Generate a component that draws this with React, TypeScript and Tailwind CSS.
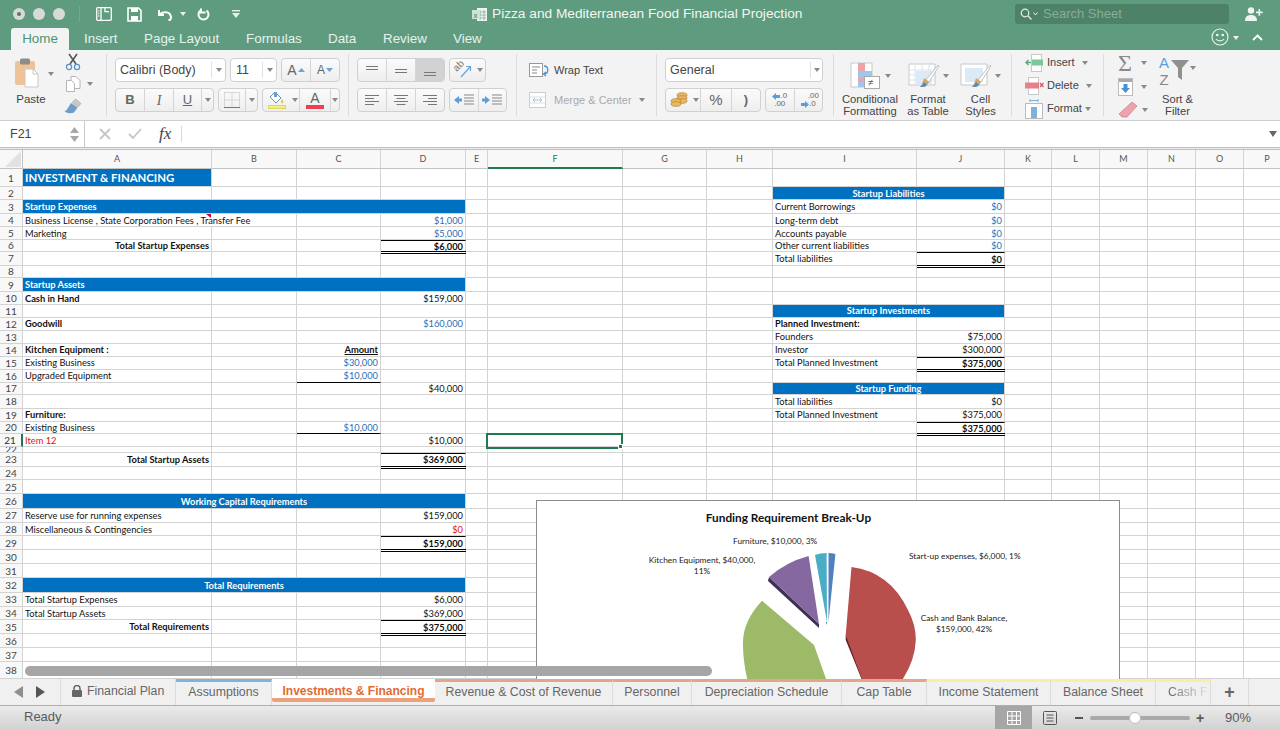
import React from "react";

const COLS = ["A","B","C","D","E","F","G","H","I","J","K","L","M","N","O","P"];
const ROW_H = [18,13,14,13,12.5,12.5,13.5,12.5,14,12.5,13,13,13,13,13,13,12.5,13.5,13,12.5,13,5.5,14,13.5,14,15,13.5,13.5,14,14,14,15,13.5,13.5,14,14,14,17];

const UI = "font-['Liberation_Sans',Arial,sans-serif]";
const BLUE = "bg-[#0070c0] border-[#0070c0] text-white font-bold";
const B = "font-bold";
const LINK = "text-[#2e6db4]";
const R = "justify-end";
const TOP = "border-t border-t-black";
const DBL = "after:absolute after:left-0 after:-right-px after:-bottom-[3px] after:z-10 after:h-[3px] after:border-y after:border-black";
const UL = "border-b border-b-black";

type Cell = { c: number; span?: number; t?: string; k?: string; tri?: boolean };
const DATA: Record<number, Cell[]> = {
  1: [{ c: 0, t: "INVESTMENT & FINANCING", k: BLUE + " text-[11.4px]" }],
  2: [{ c: 8, span: 2, t: "Startup Liabilities", k: BLUE + " justify-center" }],
  3: [{ c: 0, span: 4, t: "Startup Expenses", k: BLUE }, { c: 8, t: "Current Borrowings" }, { c: 9, t: "$0", k: R + " " + LINK }],
  4: [{ c: 0, span: 2, t: "Business License , State Corporation Fees , Transfer Fee", tri: true }, { c: 3, t: "$1,000", k: R + " " + LINK }, { c: 8, t: "Long-term debt" }, { c: 9, t: "$0", k: R + " " + LINK }],
  5: [{ c: 0, t: "Marketing" }, { c: 3, t: "$5,000", k: R + " " + LINK }, { c: 8, t: "Accounts payable" }, { c: 9, t: "$0", k: R + " " + LINK }],
  6: [{ c: 0, t: "Total Startup Expenses", k: R + " " + B }, { c: 3, t: "$6,000", k: [R, B, TOP, DBL].join(" ") }, { c: 8, t: "Other current liabilities" }, { c: 9, t: "$0", k: R + " " + LINK }],
  7: [{ c: 8, t: "Total liabilities" }, { c: 9, t: "$0", k: [R, B, TOP, DBL].join(" ") }],
  9: [{ c: 0, span: 4, t: "Startup Assets", k: BLUE }],
  10: [{ c: 0, t: "Cash in Hand", k: B }, { c: 3, t: "$159,000", k: R }],
  11: [{ c: 8, span: 2, t: "Startup Investments", k: BLUE + " justify-center" }],
  12: [{ c: 0, t: "Goodwill", k: B }, { c: 3, t: "$160,000", k: R + " " + LINK }, { c: 8, t: "Planned Investment:", k: B }],
  13: [{ c: 8, t: "Founders" }, { c: 9, t: "$75,000", k: R }],
  14: [{ c: 0, t: "Kitchen Equipment :", k: B }, { c: 2, t: "Amount", k: R + " " + B + " underline" }, { c: 8, t: "Investor" }, { c: 9, t: "$300,000", k: R }],
  15: [{ c: 0, t: "Existing Business" }, { c: 2, t: "$30,000", k: R + " " + LINK }, { c: 8, t: "Total Planned Investment" }, { c: 9, t: "$375,000", k: [R, B, TOP, DBL].join(" ") }],
  16: [{ c: 0, t: "Upgraded Equipment" }, { c: 2, t: "$10,000", k: [R, LINK, UL].join(" ") }],
  17: [{ c: 3, t: "$40,000", k: R }, { c: 8, span: 2, t: "Startup Funding", k: BLUE + " justify-center" }],
  18: [{ c: 8, t: "Total liabilities" }, { c: 9, t: "$0", k: R }],
  19: [{ c: 0, t: "Furniture:", k: B }, { c: 8, t: "Total Planned Investment" }, { c: 9, t: "$375,000", k: R }],
  20: [{ c: 0, t: "Existing Business" }, { c: 2, t: "$10,000", k: [R, LINK, UL].join(" ") }, { c: 9, t: "$375,000", k: [R, B, TOP, DBL].join(" ") }],
  21: [{ c: 0, t: "Item 12", k: "text-[#e0101a]" }, { c: 3, t: "$10,000", k: R }],
  23: [{ c: 0, t: "Total Startup Assets", k: R + " " + B }, { c: 3, t: "$369,000", k: [R, B, TOP, DBL].join(" ") }],
  26: [{ c: 0, span: 4, t: "Working Capital Requirements", k: BLUE + " justify-center" }],
  27: [{ c: 0, t: "Reserve use for running expenses" }, { c: 3, t: "$159,000", k: R }],
  28: [{ c: 0, t: "Miscellaneous & Contingencies" }, { c: 3, t: "$0", k: R + " text-[#e0101a]" }],
  29: [{ c: 3, t: "$159,000", k: [R, B, TOP, DBL].join(" ") }],
  32: [{ c: 0, span: 4, t: "Total Requirements", k: BLUE + " justify-center" }],
  33: [{ c: 0, t: "Total Startup Expenses" }, { c: 3, t: "$6,000", k: R }],
  34: [{ c: 0, t: "Total Startup Assets" }, { c: 3, t: "$369,000", k: R }],
  35: [{ c: 0, t: "Total Requirements", k: R + " " + B }, { c: 3, t: "$375,000", k: [R, B, TOP, DBL].join(" ") }],
};

const GRID_COLS = "grid-cols-[23px_189px_85px_84px_85px_22px_135px_84px_66px_144px_88px_47px_48px_48px_48px_48px_47px]";
const GRID_ROWS = "grid-rows-[19px_18px_13px_14px_13px_12.5px_12.5px_13.5px_12.5px_14px_12.5px_13px_13px_13px_13px_13px_13px_12.5px_13.5px_13px_12.5px_13px_5.5px_14px_13.5px_14px_15px_13.5px_13.5px_14px_14px_14px_15px_13.5px_13.5px_14px_14px_14px_17px]";

const GC = "border-r border-b border-[#d3d3d3]";

function Sheet() {
  const out: React.ReactNode[] = [];
  out.push(
    <div key="corner" className="bg-[#f8f8f8] border-r border-b border-[#c4c4c4] flex items-end justify-end pr-px pb-px">
      <svg width="16" height="16"><path d="M16 0V16H0z" fill="#e2e2e2" /></svg>
    </div>
  );
  COLS.forEach((c) =>
    out.push(
      <div key={c} className={c === "F" ? "bg-[#f8f8f8] border-b-2 border-b-[#1f7a4f] border-r border-r-[#d3d3d3] flex items-center justify-center text-[#1f7a4f] text-[9px]" : "bg-[#f8f8f8] border-r border-b border-[#d3d3d3] border-b-[#c4c4c4] flex items-center justify-center text-[#555] text-[9px]"}>
        {c}
      </div>
    )
  );
  ROW_H.forEach((_, i) => {
    const r = i + 1;
    out.push(
      <div key={"h" + r} className={r === 21 ? "bg-[#f8f8f8] border-r-2 border-r-[#1f7a4f] border-b border-b-[#d3d3d3] flex items-center justify-center text-[10px] leading-none text-[#333] overflow-hidden pr-px" : "bg-[#f8f8f8] border-r border-b border-[#d3d3d3] flex items-center justify-center text-[10px] leading-none text-[#444] overflow-hidden"}>
        {r}
      </div>
    );
    const cells = DATA[r] || [];
    for (let col = 0; col < 16; ) {
      const cell = cells.find((x) => x.c === col);
      if (cell) {
        const span = cell.span || 1;
        out.push(
          <div key={r + "-" + col} style={span > 1 ? { gridColumn: "span " + span } : undefined} className={"relative flex items-center px-[2px] pt-px leading-none whitespace-nowrap " + GC + " " + (cell.k || "")}>
            {cell.t}
            {cell.tri && <span className="absolute left-[183px] top-0 w-0 h-0 border-l-[5px] border-l-transparent border-t-[4px] border-t-[#d4002a]" />}
          </div>
        );
        col += span;
      } else {
        out.push(<div key={r + "-" + col} className={GC} />);
        col += 1;
      }
    }
  });
  return (
    <div className="relative h-[529px] w-full flex-none overflow-hidden bg-white font-['Lato',sans-serif] text-[9.3px] text-[#111]">
      <div className={"grid h-[529px] w-[1291px] " + GRID_COLS + " " + GRID_ROWS}>{out}</div>
      <div className="absolute left-[486px] top-[283px] h-[16px] w-[137px] border-2 border-[#1f7a4f]">
        <span className="absolute -bottom-[2px] -right-[2px] h-[5px] w-[5px] bg-[#1f7a4f] border border-white" />
      </div>
      <Chart />
      <div className="absolute left-[25px] top-[516px] h-[10px] w-[687px] rounded-full bg-[#a6a6a6]" />
    </div>
  );
}

function Chart() {
  return (
    <div className="absolute left-[536px] top-[350px] h-[240px] w-[584px] border border-[#8c8c8c] bg-white text-[8.35px] text-[#222] leading-[11px]">
      <svg className="absolute left-0 top-0" width="582" height="238" viewBox="537 501 582 238">
        <path d="M769 577 L819 624 L819 628 L768 581 Z" fill="#3f2f55" />
        <path d="M769 577 Q786 562 808.6 556 L819 624 Z" fill="#84689f" />
        <path d="M815 555 Q820 553 826.6 553 L827 622 Z" fill="#4bacc6" />
        <path d="M826 622 L827 622 L827 625 Z" fill="#25606f" />
        <path d="M828.5 553 Q832 553 835.4 554 L828.5 622 Z" fill="#4f81bd" />
        <path d="M762 600.7 Q742 622 743 645 Q743 665 750 690 L830 690 L814 645 Z" fill="#9cba68" />
        <path d="M845.7 635 L845.7 640 L866 690 L870 690 L848 638 Z" fill="#5b2422" />
        <path d="M851.5 567 Q890 572 908 610 Q916 625 915.8 640 Q915 665 895 690 L866 690 L845.7 635 Z" fill="#b94f4d" />
      </svg>
      <div className="absolute left-0 top-[10px] w-[503px] text-center text-[11.8px] leading-[14px] font-bold text-[#111]">Funding Requirement Break-Up</div>
      <div className="absolute left-[196px] top-[35px] whitespace-nowrap">Furniture, $10,000, 3%</div>
      <div className="absolute left-[111px] top-[54px] w-[108px] text-center">Kitchen Equipment, $40,000, 11%</div>
      <div className="absolute left-[372px] top-[50px] whitespace-nowrap">Start-up expenses, $6,000, 1%</div>
      <div className="absolute left-[380px] top-[112px] w-[94px] text-center">Cash and Bank Balance, $159,000, 42%</div>
    </div>
  );
}

const Caret = ({ c = "#8a8a8a" }: { c?: string }) => (
  <svg width="6" height="4" viewBox="0 0 6 4" className="flex-none"><path d="M0 0h6L3 4z" fill={c} /></svg>
);

const BTN = "flex items-center justify-center h-full border-r border-[#d6d6d6] last:border-r-0";
const SEG = "flex h-[24px] rounded-[4px] border border-[#d0d0d0] bg-linear-to-b from-[#fbfbfb] to-[#eeeeee]";

function HLines({ rows }: { rows: [number, number, number][] }) {
  return (
    <svg width="16" height="14" viewBox="0 0 16 14">
      {rows.map(([x, w, y], i) => (
        <rect key={i} x={x} y={y} width={w} height="1" fill="#777" />
      ))}
    </svg>
  );
}

function Ribbon() {
  return (
    <div className={"flex h-[70px] flex-none items-start bg-[#f3f3f3] text-[#444] " + UI}>
      {/* Clipboard */}
      <div className="flex h-full w-[106px] flex-none">
        <div className="flex w-[64px] flex-col pt-[8px]">
          <div className="flex h-[33px] items-start pl-[15px]">
            <svg width="24" height="30" viewBox="0 0 24 30">
              <rect x="0" y="3" width="20" height="24" rx="2" fill="#efc397" />
              <rect x="5" y="0.5" width="10" height="6" rx="1.5" fill="#8d8d8d" />
              <path d="M10 11h8l5 5v13H10z" fill="#fff" stroke="#c8c8c8" />
              <path d="M18 11v5h5" fill="none" stroke="#c8c8c8" />
            </svg>
            <span className="ml-[9px] mt-[14px]"><Caret /></span>
          </div>
          <div className="mt-[1px] w-[62px] text-center text-[11.5px] leading-[14px] text-[#444]">Paste</div>
        </div>
        <div className="flex flex-col pt-[3px]">
          <svg width="18" height="18" viewBox="0 0 18 18">
            <path d="M5 1l7 10M13 1L6 11" stroke="#555" strokeWidth="1.6" fill="none" />
            <circle cx="5" cy="14" r="2.6" fill="none" stroke="#5b8fc7" strokeWidth="1.2" />
            <circle cx="13" cy="14" r="2.6" fill="none" stroke="#5b8fc7" strokeWidth="1.2" />
          </svg>
          <div className="mt-[4px] flex items-center">
            <svg width="18" height="18" viewBox="0 0 18 18" fill="#fff" stroke="#b5b5b5">
              <path d="M7 1.500h5l4 4v8H7z" />
              <path d="M2.500 5.500h5l3 3v8h-8z" />
            </svg>
            <span className="ml-[5px]"><Caret /></span>
          </div>
          <svg className="mt-[5px]" width="18" height="16" viewBox="0 0 18 16">
            <path d="M11.500 1l5.500 4.500-3 3.500-6-4.500z" fill="#c8c8c8" stroke="#999" strokeWidth=".5" />
            <path d="M7 5l6.500 4.500L10 14.500C7 15.800 3.500 15.500 .5 13.500 3 12.500 5 8 7 5z" fill="#6f9dc8" />
          </svg>
        </div>
      </div>
      <div className="mt-[4px] h-[62px] w-px flex-none bg-[#dcdcdc]" />
      {/* Font */}
      <div className="w-[241px] flex-none pl-[8px] pt-[8px]">
        <div className="flex h-[24px]">
          <div className="flex w-[111px] items-center rounded-[4px] border border-[#d0d0d0] bg-white pl-[4px] text-[12.5px]">
            <span className="flex-1">Calibri (Body)</span>
            <span className="flex h-[16px] w-[14px] items-center justify-center border-l border-[#e2e2e2]"><Caret /></span>
          </div>
          <div className="ml-[4px] flex w-[47px] items-center rounded-[4px] border border-[#d0d0d0] bg-white pl-[5px] text-[12.5px]">
            <span className="flex-1">11</span>
            <span className="flex h-[16px] w-[14px] items-center justify-center border-l border-[#e2e2e2]"><Caret /></span>
          </div>
          <div className={"ml-[4px] w-[59px] " + SEG}>
            <div className={BTN + " w-[29px] text-[14px] text-[#666]"}>A<svg className="ml-px" width="7" height="4"><path d="M0 4h7L3.500 0z" fill="#6ba3d6" /></svg></div>
            <div className={BTN + " flex-1 text-[12px] text-[#666]"}>A<svg className="ml-px" width="7" height="4"><path d="M0 0h7L3.500 4z" fill="#6ba3d6" /></svg></div>
          </div>
        </div>
        <div className="mt-[6px] flex h-[24px]">
          <div className={"w-[99px] " + SEG}>
            <div className={BTN + " w-[29px] text-[13px] font-bold text-[#666]"}>B</div>
            <div className={BTN + " w-[29px] font-['Liberation_Serif',serif] text-[14px] italic text-[#666]"}>I</div>
            <div className={BTN + " w-[28px] text-[13px] text-[#666] underline"}>U</div>
            <div className={BTN + " flex-1"}><Caret /></div>
          </div>
          <div className={"ml-[4px] w-[40px] " + SEG}>
            <div className={BTN + " w-[27px]"}>
              <svg width="18" height="18" viewBox="0 0 18 18">
                <path d="M1.500 1.500h15v15M1.500 1.500v15M9 1.500v15M1.500 9h15" stroke="#bbb" strokeDasharray="1 1" fill="none" />
                <path d="M1 16.500h16" stroke="#777" />
              </svg>
            </div>
            <div className={BTN + " flex-1"}><Caret /></div>
          </div>
          <div className={"ml-[4px] w-[78px] " + SEG}>
            <div className="flex h-full w-[28px] flex-col items-center justify-end pb-[2px]">
              <svg width="16" height="14" viewBox="0 0 16 14">
                <path d="M6 1l6 6-5 5-6-6z" fill="#fff" stroke="#6b8fb5" />
                <path d="M5 1h3v5H5z" fill="#6b9ed0" />
                <path d="M13 8c1 2 2 3 1 4s-2 0-2-1 .5-2 1-3z" fill="#e8c64a" />
              </svg>
              <div className="h-[4px] w-[18px] bg-[#f7ef7a] border border-[#dcd36a]" />
            </div>
            <div className={BTN + " w-[9px]"}><Caret /></div>
            <div className="flex h-full w-[30px] flex-col items-center justify-end pb-[2px]">
              <span className="text-[14px] leading-[14px] text-[#666]">A</span>
              <div className="h-[4px] w-[18px] bg-[#ee3f50]" />
            </div>
            <div className="flex flex-1 items-center justify-center border-l border-[#d6d6d6]"><Caret /></div>
          </div>
        </div>
      </div>
      <div className="mt-[4px] h-[62px] w-px flex-none bg-[#dcdcdc]" />
      {/* Alignment */}
      <div className="w-[167px] flex-none pl-[8px] pt-[8px]">
        <div className="flex h-[24px]">
          <div className={"w-[88px] " + SEG}>
            <div className={BTN + " w-[29px]"}><HLines rows={[[2, 12, 3], [2, 12, 6]]} /></div>
            <div className={BTN + " w-[29px]"}><HLines rows={[[2, 12, 6], [2, 12, 9]]} /></div>
            <div className="flex h-full flex-1 items-center justify-center rounded-r-[3px] bg-[#d2d2d2]"><HLines rows={[[2, 12, 9], [2, 12, 12]]} /></div>
          </div>
          <div className={"ml-[4px] w-[37px] " + SEG}>
            <div className="relative flex h-full w-[25px] items-center justify-center">
              <span className="absolute left-[3px] top-[2px] rotate-[-45deg] text-[10px] leading-[10px] text-[#777]">ab</span>
              <svg width="20" height="18" viewBox="0 0 20 18">
                <path d="M8 16L17 6M13 5.500h4.500V10" stroke="#6ba3d6" strokeWidth="1.200" fill="none" />
              </svg>
            </div>
            <div className="flex flex-1 items-center justify-center"><Caret /></div>
          </div>
        </div>
        <div className="mt-[6px] flex h-[24px]">
          <div className={"w-[88px] " + SEG}>
            <div className={BTN + " w-[29px]"}><HLines rows={[[1, 14, 2], [1, 9, 5], [1, 14, 8], [1, 9, 11]]} /></div>
            <div className={BTN + " w-[29px]"}><HLines rows={[[1, 14, 2], [3.5, 9, 5], [1, 14, 8], [3.5, 9, 11]]} /></div>
            <div className={BTN + " flex-1"}><HLines rows={[[1, 14, 2], [6, 9, 5], [1, 14, 8], [6, 9, 11]]} /></div>
          </div>
          <div className={"ml-[4px] w-[58px] " + SEG}>
            {[0, 1].map((f) => (
              <div key={f} className={BTN + " flex-1"}>
                <svg width="22" height="14" viewBox="0 0 22 14">
                  <path d={f === 0 ? "M1 7l5-4v2.500h3v3H6V11z" : "M9 7L4 3v2.500H1v3h3V11z"} fill="#5a9fdc" />
                  <path d="M11 2h10M11 5h10M11 8h10M11 11h10" stroke="#888" />
                </svg>
              </div>
            ))}
          </div>
        </div>
      </div>
      <div className="mt-[4px] h-[62px] w-px flex-none bg-[#dcdcdc]" />
      {/* Wrap */}
      <div className="w-[139px] flex-none pl-[12px] pt-[8px] text-[11px]">
        <div className="flex h-[24px] items-center">
          <svg width="22" height="14" viewBox="0 0 22 14">
            <rect x=".5" y=".5" width="13" height="13" fill="#fff" stroke="#999" />
            <path d="M3 4h8M3 7h5M3 10h5" stroke="#888" />
            <path d="M15 3c5 0 5 8 0 8M17 9l-2.500 2 2.500 2" fill="none" stroke="#4d93d6" strokeWidth="1.3" />
          </svg>
          <span className="ml-[3px]">Wrap Text</span>
        </div>
        <div className="mt-[6px] flex h-[24px] items-center text-[#aaa]">
          <svg width="18" height="16" viewBox="0 0 18 16">
            <rect x=".5" y=".5" width="16" height="15" fill="#fff" stroke="#ccc" />
            <path d="M.5 5h16M.5 11h16" stroke="#ddd" />
            <path d="M4 8h9M6 6L4 8l2 2M11 6l2 2-2 2" fill="none" stroke="#a9bfd4" />
          </svg>
          <span className="ml-[7px]">Merge &amp; Center</span>
          <span className="ml-[7px]"><Caret /></span>
        </div>
      </div>
      <div className="mt-[4px] h-[62px] w-px flex-none bg-[#dcdcdc]" />
      {/* Number */}
      <div className="w-[176px] flex-none pl-[8px] pt-[8px]">
        <div className="flex h-[24px] w-[158px] items-center rounded-[4px] border border-[#d0d0d0] bg-white pl-[4px] text-[12.5px]">
          <span className="flex-1">General</span>
          <span className="flex h-[16px] w-[12px] items-center justify-center border-l border-[#e2e2e2]"><Caret /></span>
        </div>
        <div className="mt-[6px] flex h-[24px]">
          <div className={"w-[96px] " + SEG}>
            <div className="flex h-full w-[25px] items-center justify-center">
              <svg width="18" height="18" viewBox="0 0 18 18">
                <ellipse cx="12" cy="4" rx="5" ry="2.3" fill="#e9b95f" stroke="#a9782c" strokeWidth=".6" />
                <ellipse cx="12" cy="7" rx="5" ry="2.3" fill="#e9b95f" stroke="#a9782c" strokeWidth=".6" />
                <ellipse cx="12" cy="10" rx="5" ry="2.3" fill="#e9b95f" stroke="#a9782c" strokeWidth=".6" />
                <ellipse cx="6" cy="10" rx="5" ry="2.3" fill="#e9b95f" stroke="#a9782c" strokeWidth=".6" />
                <ellipse cx="6" cy="13" rx="5" ry="2.3" fill="#e9b95f" stroke="#a9782c" strokeWidth=".6" />
              </svg>
            </div>
            <div className={BTN + " w-[10px]"}><Caret /></div>
            <div className={BTN + " w-[31px] text-[15px] text-[#666]"}>%</div>
            <div className="flex flex-1 items-center justify-center text-[13px] font-bold text-[#666]">)</div>
          </div>
          <div className={"ml-[4px] w-[58px] " + SEG}>
            <div className={BTN + " flex-1 flex-col text-[8px] leading-[8px] text-[#666]"}>
              <span className="flex items-center"><svg width="8" height="7"><path d="M0 3.500L4 0v2h4v3H4v2z" fill="#5a9fdc" /></svg>.0</span><span>.00</span>
            </div>
            <div className={BTN + " flex-1 flex-col text-[8px] leading-[8px] text-[#666]"}>
              <span className="self-end pr-[3px]">.00</span><span className="flex items-center"><svg width="8" height="7"><path d="M8 3.500L4 0v2H0v3h4v2z" fill="#5a9fdc" /></svg>.0</span>
            </div>
          </div>
        </div>
      </div>
      <div className="mt-[4px] h-[62px] w-px flex-none bg-[#dcdcdc]" />
      {/* Styles */}
      <div className="flex h-full w-[177px] flex-none pl-[5px] pt-[8px] text-center text-[11.2px] leading-[12px]">
        <div className="flex w-[62px] flex-col items-center">
          <div className="flex h-[35px] items-center">
            <svg width="32" height="28" viewBox="0 0 32 28">
              <path d="M1 1h21v24H1z" fill="#fff" stroke="#c8c8c8" />
              <rect x="8" y="1" width="7" height="8" fill="#eea3a8" />
              <rect x="8" y="9" width="7" height="7" fill="#9cc7ee" />
              <rect x="15" y="9" width="7" height="7" fill="#9cc7ee" />
              <rect x="8" y="16" width="7" height="4" fill="#eea3a8" />
              <rect x="8" y="20" width="7" height="5" fill="#9cc7ee" />
              <rect x="14.5" y="14.5" width="15" height="12" fill="#fff" stroke="#aaa" />
              <text x="18" y="24" fontSize="10" fill="#555">≠</text>
            </svg>
            <span className="ml-[3px]"><Caret /></span>
          </div>
          <div>Conditional<br />Formatting</div>
        </div>
        <div className="flex w-[54px] flex-col items-center">
          <div className="flex h-[35px] items-center">
            <svg width="32" height="26" viewBox="0 0 32 26">
              <path d="M1 1h26v21H1z" fill="#fff" stroke="#c8c8c8" />
              <path d="M7 1v21M14 1v21M21 1v21M1 7h26M1 12h26M1 17h26" stroke="#dde3ea" />
              <rect x="8" y="8" width="16" height="14" fill="#dce9f6" />
              <path d="M18 17L30 2l1 1-10 16z" fill="#fff" stroke="#aaa" strokeWidth=".7" />
              <path d="M16 15l5 4-1 2c-2 3-5 3-8 3 2-2 3-6 4-9z" fill="#d9a266" />
              <path d="M12 24c2-1 3-3 4-5l3 3c-2 2-4 2-7 2z" fill="#3f8fd8" />
            </svg>
            <span className="ml-[3px]"><Caret /></span>
          </div>
          <div>Format<br />as Table</div>
        </div>
        <div className="flex w-[51px] flex-col items-center">
          <div className="flex h-[35px] items-center">
            <svg width="32" height="26" viewBox="0 0 32 26">
              <path d="M1 1h26v21H1z" fill="#fff" stroke="#c8c8c8" />
              <rect x="5" y="5" width="18" height="14" fill="#dce9f6" />
              <path d="M18 17L30 2l1 1-10 16z" fill="#fff" stroke="#aaa" strokeWidth=".7" />
              <path d="M16 15l5 4-1 2c-2 3-5 3-8 3 2-2 3-6 4-9z" fill="#d9a266" />
              <path d="M12 24c2-1 3-3 4-5l3 3c-2 2-4 2-7 2z" fill="#3f8fd8" />
            </svg>
            <span className="ml-[3px]"><Caret /></span>
          </div>
          <div>Cell<br />Styles</div>
        </div>
      </div>
      <div className="mt-[4px] h-[62px] w-px flex-none bg-[#dcdcdc]" />
      {/* Cells */}
      <div className="w-[91px] flex-none pl-[13px] pt-px text-[11px]">
        <div className="flex h-[23px] items-center">
          <svg width="19" height="18" viewBox="0 0 19 18">
            <rect x="6.5" y=".5" width="10" height="17" fill="#fff" stroke="#c8c8c8" />
            <rect x="7" y="5.5" width="11" height="6" fill="#7fc79a" />
            <path d="M6 8.500H1M3.500 6L1 8.500 3.500 11" stroke="#5aa97d" fill="none" strokeWidth="1.4" />
          </svg>
          <span className="ml-[3px]">Insert</span>
          <span className="ml-[7px]"><Caret /></span>
        </div>
        <div className="flex h-[23px] items-center">
          <svg width="19" height="18" viewBox="0 0 19 18">
            <rect x="3.5" y=".5" width="10" height="17" fill="#fff" stroke="#c8c8c8" />
            <rect x="0" y="5.5" width="14" height="6" fill="#e8808a" />
            <path d="M15 6l3.500 4M18.500 6L15 10" stroke="#d4546a" strokeWidth="1.2" />
          </svg>
          <span className="ml-[3px]">Delete</span>
          <span className="ml-[7px]"><Caret /></span>
        </div>
        <div className="flex h-[23px] items-center">
          <svg width="19" height="20" viewBox="0 0 19 20">
            <rect x=".5" y="4.5" width="17" height="15" fill="#fff" stroke="#bbb" />
            <rect x="6" y="8" width="6" height="11" fill="#7fb0de" />
            <path d="M5 1.500h8M5 0v3M13 0v3" stroke="#7fb0de" />
          </svg>
          <span className="ml-[3px]">Format</span>
          <span className="ml-[3px]"><Caret /></span>
        </div>
      </div>
      <div className="mt-[4px] h-[62px] w-px flex-none bg-[#dcdcdc]" />
      {/* Editing */}
      <div className="flex flex-none pl-[14px] pt-[3px]">
        <div className="flex w-[39px] flex-col">
          <div className="flex h-[20px] items-center">
            <span className="w-[18px] font-['Liberation_Serif',serif] text-[24px] leading-[20px] text-[#8a8a8a]">Σ</span>
            <span className="ml-[5px]"><Caret /></span>
          </div>
          <div className="mt-[4px] flex h-[20px] items-center">
            <svg width="15" height="18" viewBox="0 0 15 18">
              <rect x=".5" y=".5" width="14" height="17" fill="#fff" stroke="#bbb" />
              <rect x="1" y="1" width="13" height="3" fill="#aaa" />
              <path d="M5.500 6h4v4H12l-4.500 5L3 10h2.500z" fill="#4a90d9" />
            </svg>
            <span className="ml-[8px]"><Caret /></span>
          </div>
          <div className="mt-[3px] flex h-[20px] items-center">
            <svg width="20" height="18" viewBox="0 0 20 18">
              <path d="M14 1l5 4-10 11H4l-3-3z" fill="#eea2ae" stroke="#c97b88" strokeWidth=".7" />
            </svg>
            <span className="ml-[4px]"><Caret /></span>
          </div>
        </div>
        <div className="flex w-[44px] flex-col items-center text-center text-[11.2px] leading-[12px]">
          <div className="flex h-[40px] items-start self-start pt-px">
            <div className="flex w-[14px] flex-col text-center text-[15px] leading-[17px]"><span className="text-[#5a9fdc]">A</span><span className="text-[#888]">Z</span></div>
            <svg className="mt-[5px]" width="18" height="22" viewBox="0 0 18 22"><path d="M0 1h18l-7 8v12l-4-3V9z" fill="#8f8f8f" /></svg>
            <span className="ml-px mt-[12px]"><Caret /></span>
          </div>
          <div className="-ml-[3px]">Sort &amp;<br />Filter</div>
        </div>
      </div>
    </div>
  );
}

const TITLE_TABS: [string, string][] = [
  ["Insert", "w-[33px]"],
  ["Page Layout", "w-[75px]"],
  ["Formulas", "w-[55px]"],
  ["Data", "w-[28px]"],
  ["Review", "w-[43px]"],
  ["View", "w-[28px]"],
];

function Titlebar() {
  return (
    <div className={"flex h-[50px] flex-none flex-col bg-[#5f9c7f] text-white " + UI}>
      <div className="flex h-[28px] flex-none items-center">
        <div className="flex w-[472px] flex-none items-center pl-[13px]">
          <div className="flex gap-[8px]">
            <span className="flex h-[12px] w-[12px] items-center justify-center rounded-full bg-[#d6dbd8]"><span className="h-[4px] w-[4px] rounded-full bg-[#66706a]" /></span>
            <span className="h-[12px] w-[12px] rounded-full bg-[#d6dbd8]" />
            <span className="h-[12px] w-[12px] rounded-full bg-[#d6dbd8]" />
          </div>
          <div className="ml-[14px] h-[16px] w-px bg-[#6fa98e]" />
          <svg className="ml-[16px]" width="16" height="14" viewBox="0 0 16 14" fill="none" stroke="#fff" strokeWidth="1.3">
            <rect x=".7" y=".7" width="14.6" height="12.6" rx="1" />
            <path d="M5 .7v12.600M2.300 4h1M2.300 6.500h1M2.300 9h1M9 .7v4h4" />
          </svg>
          <svg className="ml-[15px]" width="15" height="15" viewBox="0 0 15 15">
            <path d="M1 1h10.500L14 3.500V14H1z" fill="none" stroke="#fff" strokeWidth="1.6" />
            <rect x="4" y="1" width="7" height="4" fill="#fff" />
            <rect x="4" y="9" width="7" height="5" fill="#fff" />
          </svg>
          <svg className="ml-[15px]" width="16" height="13" viewBox="0 0 16 13" fill="none" stroke="#fff" strokeWidth="2">
            <path d="M2 2v5h5" />
            <path d="M2.500 7C5 3.500 13 2.500 14 9c.2 1.500-1 3-2.500 3.500" />
          </svg>
          <span className="ml-[7px]"><Caret c="#e6f0eb" /></span>
          <svg className="ml-[11px]" width="13" height="15" viewBox="0 0 13 15" fill="none" stroke="#fff" strokeWidth="2">
            <path d="M4 1.500v4H8.500" />
            <path d="M3.500 3.500a5 5 0 1 0 6 0" />
          </svg>
          <svg className="ml-[21px]" width="10" height="8" viewBox="0 0 10 8">
            <rect x="1" y="0" width="8" height="1.4" fill="#e6f0eb" />
            <path d="M1 3h8L5 8z" fill="#e6f0eb" />
          </svg>
        </div>
        <svg width="16" height="15" viewBox="0 0 16 15" className="flex-none">
          <rect x="5" y="1" width="10" height="13" fill="#eef4f1" />
          <path d="M8 3v10M12 3v10M6 5h8M6 8h8M6 11h8" stroke="#7ca893" strokeWidth=".7" />
          <rect x="0" y="3" width="8" height="9" fill="#cfe2d8" />
          <text x="1.5" y="10.5" fontSize="7" fill="#5f9c7f" fontWeight="bold">x</text>
        </svg>
        <div className="ml-[4px] flex-1 text-[13.7px] text-[#f2f7f4]">Pizza and Mediterranean Food Financial Projection</div>
        <div className="flex h-[20px] w-[214px] flex-none items-center rounded-[3px] bg-[#4d8268] pl-[5px] text-[13px] text-[#88ae9b]">
          <svg width="12" height="12" viewBox="0 0 12 12" fill="none" stroke="#e8f0ec" strokeWidth="1.2"><circle cx="5" cy="5" r="3.8" /><path d="M8 8l3.500 3.500" /></svg>
          <svg className="ml-px" width="5" height="4" viewBox="0 0 5 4" fill="none" stroke="#e8f0ec"><path d="M.5.5L2.500 3l2-2.500" /></svg>
          <span className="ml-[5px]">Search Sheet</span>
        </div>
        <svg className="ml-[16px] mr-[17px]" width="18" height="14" viewBox="0 0 18 14" fill="#eef4f1">
          <circle cx="6" cy="3.5" r="3.2" />
          <path d="M0 14c0-4 2-6 6-6s6 2 6 6z" />
          <path d="M13.500 2h1.600v2.600h2.600v1.600h-2.600v2.600h-1.600V6.200H11V4.600h2.500z" />
        </svg>
      </div>
      <div className="flex h-[22px] flex-none items-end pl-[11px] text-[13.4px]">
        <div className="flex h-[22px] w-[58px] flex-none items-center justify-center rounded-t-[3px] bg-[#f3f3f3] pt-px text-[#4e9473]">Home</div>
        <div className="ml-[15px] flex h-[22px] gap-[27px]">
          {TITLE_TABS.map(([t, w]) => (
            <div key={t} className={"flex items-center whitespace-nowrap pt-px text-[#e8f1ec] " + w}>{t}</div>
          ))}
        </div>
        <div className="flex-1" />
        <svg className="mb-[4px]" width="18" height="18" viewBox="0 0 18 18" fill="none" stroke="#eef4f1" strokeWidth="1.1">
          <circle cx="9" cy="9" r="8" />
          <circle cx="6.300" cy="7" r=".8" fill="#eef4f1" />
          <circle cx="11.700" cy="7" r=".8" fill="#eef4f1" />
          <path d="M5 11c1.500 2.500 6.500 2.500 8 0" />
        </svg>
        <span className="mb-[10px] ml-[4px]"><Caret c="#eef4f1" /></span>
        <svg className="mb-[9px] ml-[13px] mr-[17px]" width="11" height="7" viewBox="0 0 11 7" fill="none" stroke="#fff" strokeWidth="1.8"><path d="M1 6l4.500-4.500L10 6" /></svg>
      </div>
    </div>
  );
}

function FormulaBar() {
  return (
    <div className={"flex h-[27px] flex-none items-center border-t border-[#cfcfcf] bg-white text-[#444] " + UI}>
      <div className="flex h-full w-[85px] flex-none items-center border-r border-[#c9c9c9] pl-[10px] pr-[5px] text-[12.5px]">
        <span className="flex-1">F21</span>
        <span className="flex flex-col gap-[3px]">
          <svg width="9" height="6"><path d="M0 6h9L4.500 0z" fill="#a8a8a8" /></svg>
          <svg width="9" height="6"><path d="M0 0h9L4.500 6z" fill="#a8a8a8" /></svg>
        </span>
      </div>
      <svg className="ml-[14px]" width="12" height="12" viewBox="0 0 12 12" stroke="#c6c6c6" strokeWidth="1.8"><path d="M1 1l10 10M11 1L1 11" /></svg>
      <svg className="ml-[17px]" width="14" height="12" viewBox="0 0 14 12" stroke="#c6c6c6" strokeWidth="1.8" fill="none"><path d="M1 6l4 4 8-9" /></svg>
      <span className="ml-[17px] w-[15px] font-['Liberation_Serif',serif] text-[17px] italic text-[#444]">fx</span>
      <div className="ml-[7px] h-[16px] w-px bg-[#d8d8d8]" />
      <div className="flex-1" />
      <svg className="mr-[3px]" width="8" height="6"><path d="M0 0h8L4 6z" fill="#666" /></svg>
    </div>
  );
}

const SHEET_TABS: [string, string, string][] = [
  ["Assumptions", "w-[96px]", "border-t-[#84b2d6]"],
  ["Investments & Financing", "w-[163px]", "active"],
  ["Revenue & Cost of Revenue", "w-[178px]", "border-t-[#e3a68a]"],
  ["Personnel", "w-[79px]", "border-t-[#e3a68a]"],
  ["Depreciation Schedule", "w-[150px]", "border-t-[#e3a68a]"],
  ["Cap Table", "w-[85px]", "border-t-[#e3a68a]"],
  ["Income Statement", "w-[124px]", "border-t-[#f4f0a6]"],
  ["Balance Sheet", "w-[105px]", "border-t-[#f4f0a6]"],
];

function SheetTabs() {
  return (
    <div className={"flex h-[27px] flex-none border-b border-[#aeaeae] bg-[#f0f0f0] text-[12.3px] text-[#666] " + UI}>
      <div className="flex w-[61px] flex-none items-center justify-center gap-[13px] border-r border-[#dcdcdc] pr-[2px]">
        <svg width="9" height="12"><path d="M9 0v12L0 6z" fill="#8f8f8f" /></svg>
        <svg width="9" height="12"><path d="M0 0v12l9-6z" fill="#555" /></svg>
      </div>
      <div className="flex w-[115px] flex-none items-center border-r border-[#dcdcdc] pb-[2px] pl-[11px]">
        <svg width="10" height="12" viewBox="0 0 10 12"><path d="M2 5V3.500a3 3 0 0 1 6 0V5" fill="none" stroke="#666" strokeWidth="1.5" /><rect y="5" width="10" height="7" rx="1" fill="#666" /></svg>
        <span className="ml-[5px] whitespace-nowrap">Financial Plan</span>
      </div>
      {SHEET_TABS.map(([t, w, k]) =>
        k === "active" ? (
          <div key={t} className={"flex h-[23px] flex-none items-center justify-center rounded-b-[2px] border-b-[4px] border-[#eda17b] bg-white pt-[5px] text-[12px] font-bold text-[#e26b31] " + w}>{t}</div>
        ) : (
          <div key={t} className={"flex flex-none items-center justify-center whitespace-nowrap border-r border-t-[3px] border-r-[#dcdcdc] pb-[3px] " + w + " " + k}>{t}</div>
        )
      )}
      <div className="flex w-[55px] flex-none items-center overflow-hidden border-r border-t-[3px] border-r-[#dcdcdc] border-t-[#f4f0a6] pb-[3px] pl-[12px] whitespace-nowrap">
        <span className="bg-linear-to-r from-[#666] to-[#e6e6e6] bg-clip-text text-transparent">Cash F</span>
      </div>
      <div className="flex w-[38px] flex-none items-center justify-center border-r border-[#dcdcdc] text-[18px] font-bold text-[#666]">+</div>
    </div>
  );
}

function StatusBar() {
  return (
    <div className={"flex h-[23px] flex-none items-center bg-linear-to-b from-[#ebebeb] to-[#d2d2d2] text-[13px] text-[#5a5a5a] " + UI}>
      <span className="mb-[2px] ml-[24px]">Ready</span>
      <div className="flex-1" />
      <div className="flex h-full w-[37px] items-center justify-center bg-[#a6a6a6]">
        <svg width="14" height="14" viewBox="0 0 14 14" fill="none" stroke="#fff"><path d="M.5.5h13v13H.5zM.5 5h13M.5 9.500h13M5 .5v13M9.500 .5v13" /></svg>
      </div>
      <div className="flex w-[35px] items-center justify-center">
        <svg width="14" height="14" viewBox="0 0 14 14" fill="none" stroke="#555"><rect x=".5" y=".5" width="13" height="13" rx="1" /><path d="M3.500 4h7M3.500 7h7M3.500 10h7" /></svg>
      </div>
      <div className="ml-[8px] h-[2px] w-[8px] bg-[#555]" />
      <div className="relative ml-[7px] h-[4px] w-[100px] rounded-full bg-[#a9a9a9]">
        <span className="absolute left-[39px] -top-[4px] h-[12px] w-[12px] rounded-full border border-[#bbb] bg-white" />
      </div>
      <span className="ml-[6px] w-[10px] text-[14px] font-bold leading-none">+</span>
      <span className="ml-[19px] w-[26px]">90%</span>
      <span className="w-[29px]" />
    </div>
  );
}

export default function App() {
  return (
    <div className="flex h-[729px] w-[1280px] flex-col overflow-hidden bg-white">
      <Titlebar />
      <Ribbon />
      <FormulaBar />
      <div className="h-[3px] flex-none border-y border-[#bcbcbc] bg-[#efefef]" />
      <Sheet />
      <SheetTabs />
      <StatusBar />
    </div>
  );
}
